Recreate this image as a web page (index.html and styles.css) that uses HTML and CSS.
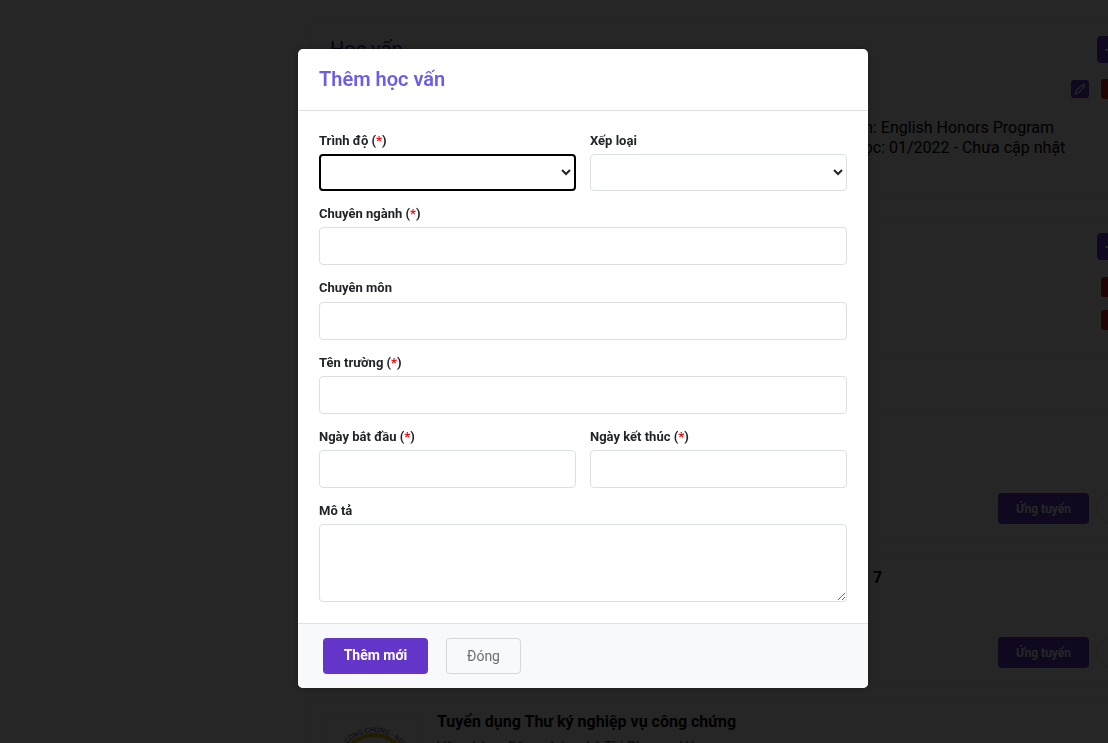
FILE: index.html
```html
<!DOCTYPE html>
<html lang="vi">
<head>
<meta charset="utf-8">
<title>Thêm học vấn</title>
<link rel="stylesheet" href="styles.css">
</head>
<body>
<main class="page">
  <section class="card card-edu">
    <div class="card-head">
      <h2 class="section-title">Học vấn</h2>
      <button class="add-btn" type="button">
        <svg viewBox="0 0 14 14" width="14" height="14" stroke="currentColor" stroke-width="2"><path d="M0 7h14M7 0v14"/></svg>
      </button>
    </div>
    <div class="edu-actions">
      <button class="icon-btn purple" type="button">
        <svg viewBox="0 0 16 16" width="14" height="14" fill="none" stroke="currentColor" stroke-width="1.3"><path d="M2.5 13.5l.8-3.2 7.6-7.6a1.3 1.3 0 0 1 1.9 0l.5.5a1.3 1.3 0 0 1 0 1.9l-7.6 7.6z"/><path d="M9.8 3.8l2.4 2.4"/></svg>
      </button>
      <button class="icon-btn red" type="button">
        <svg viewBox="0 0 12 14" width="12" height="14" fill="none" stroke="currentColor" stroke-width="1.2"><path d="M0 3h12M4 3V1h4v2M2 3l.6 10h6.8L10 3"/></svg>
      </button>
    </div>
    <div class="edu-text">
      <p>Chuyên ngành: English Honors Program</p>
      <p>Thời gian ở học: 01/2022 - Chưa cập nhật</p>
    </div>
  </section>
  <section class="card card-skill">
    <div class="card-head head-right">
      <button class="add-btn" type="button">
        <svg viewBox="0 0 14 14" width="14" height="14" stroke="currentColor" stroke-width="2"><path d="M0 7h14M7 0v14"/></svg>
      </button>
    </div>
    <div class="red-stack">
      <button class="icon-btn red" type="button">
        <svg viewBox="0 0 12 14" width="12" height="14" fill="none" stroke="currentColor" stroke-width="1.2"><path d="M0 3h12M4 3V1h4v2M2 3l.6 10h6.8L10 3"/></svg>
      </button>
      <button class="icon-btn red" type="button">
        <svg viewBox="0 0 12 14" width="12" height="14" fill="none" stroke="currentColor" stroke-width="1.2"><path d="M0 3h12M4 3V1h4v2M2 3l.6 10h6.8L10 3"/></svg>
      </button>
    </div>
  </section>
  <section class="card card-job">
    <div class="job-foot">
      <button class="apply" type="button">Ứng tuyển</button>
      <span class="round"></span>
    </div>
  </section>
  <section class="card card-job">
    <h3 class="job-title title-right">7</h3>
    <div class="job-foot">
      <button class="apply" type="button">Ứng tuyển</button>
      <span class="round"></span>
    </div>
  </section>
  <section class="card card-last">
    <div class="logo-box">
      <svg viewBox="0 0 98 90" width="98" height="90" fill="none">
        <path id="logo-arc" d="M13 54a35 35 0 0 1 70 0"/>
        <circle cx="48" cy="54" r="32" stroke="#e3c400" stroke-width="4"/>
        <text font-family="Roboto, sans-serif" font-size="7" fill="#16408f"><textPath href="#logo-arc" startOffset="25">CÔNG CHỨNG - NOTARY</textPath></text>
      </svg>
    </div>
    <div>
      <h3 class="job-title">Tuyển dụng Thư ký nghiệp vụ công chứng</h3>
      <p class="job-sub">Văn phòng Công chứng Lê Thị Phương Hà</p>
    </div>
  </section>
</main>

<div class="backdrop"></div>

<div class="modal-wrap">
  <form class="modal">
    <header class="modal-head">
      <h1>Thêm học vấn</h1>
    </header>
    <div class="modal-body">
      <div class="row two">
        <div class="field">
          <label>Trình độ (<span class="req">*</span>)</label>
          <select class="control select focused"><option></option></select>
        </div>
        <div class="field">
          <label>Xếp loại</label>
          <select class="control select"><option></option></select>
        </div>
      </div>
      <div class="field">
        <label>Chuyên ngành (<span class="req">*</span>)</label>
        <input class="control" type="text">
      </div>
      <div class="field">
        <label>Chuyên môn</label>
        <input class="control" type="text">
      </div>
      <div class="field">
        <label>Tên trường (<span class="req">*</span>)</label>
        <input class="control" type="text">
      </div>
      <div class="row two">
        <div class="field">
          <label>Ngày bắt đầu (<span class="req">*</span>)</label>
          <input class="control" type="text">
        </div>
        <div class="field">
          <label>Ngày kết thúc (<span class="req">*</span>)</label>
          <input class="control" type="text">
        </div>
      </div>
      <div class="field last">
        <label>Mô tả</label>
        <textarea class="control area"></textarea>
      </div>
    </div>
    <footer class="modal-foot">
      <button class="btn primary" type="button">Thêm mới</button>
      <button class="btn ghost" type="button">Đóng</button>
    </footer>
  </form>
</div>
</body>
</html>
```
FILE: styles.css
```css
* { box-sizing: border-box; }
html, body { margin: 0; height: 100%; overflow: hidden; }
body { background: #fff; font-family: Roboto, "Noto Sans", sans-serif; color: #212529; }

.page { width: 830px; margin-left: 310px; padding-top: 19px; display: flex; flex-direction: column; height: 743px; overflow: hidden; }
.card { border: 1px solid #eef0f4; background: #fff; flex: none; }
.card-edu { height: 175px; padding: 16px 12px 0 19px; margin-bottom: 22px; }
.card-head { display: flex; justify-content: space-between; }
.head-right { justify-content: flex-end; }
.section-title { margin: 0; padding-top: 1px; font-size: 20px; font-weight: 400; color: #2c1d8f; line-height: 24px; }
.add-btn { width: 30px; height: 27px; border: 0; border-radius: 4px; background: #6435c9; color: #fff; padding: 0; display: flex; align-items: center; justify-content: center; }
.edu-actions { display: flex; align-items: center; justify-content: flex-end; gap: 12px; margin-top: 16px; }
.edu-text { margin: 19px 0 0 442px; font-size: 16px; line-height: 20px; color: #000; white-space: nowrap; }
.edu-text p { margin: 0; }
.icon-btn { width: 18px; height: 18px; border: 0; border-radius: 3px; padding: 0; display: flex; align-items: center; justify-content: center; color: #fff; }
.purple { background: #6435c9; }
.red { background: #d92525; width: 26px; height: 20px; }
.card-skill { height: 138px; padding: 16px 12px 0 19px; margin-bottom: 55px; }
.red-stack { display: flex; flex-direction: column; align-items: flex-end; gap: 13px; margin-top: 17px; }
.card-job { height: 130px; display: flex; flex-direction: column; padding: 14px 0 14px; margin-bottom: 14px; }
.job-foot { margin: auto 0 0 687px; display: flex; align-items: center; gap: 7px; }
.apply { width: 91px; height: 31px; border: 0; border-radius: 4px; background: #6435c9; color: #fff; font: 700 12px Roboto, sans-serif; padding: 0; }
.round { width: 31px; height: 31px; border: 1px solid #d8d8d8; border-radius: 50%; }
.job-title { margin: 0; font-size: 16px; line-height: 20px; font-weight: 700; color: #000; }
.title-right { margin-left: 562px; }
.card-last { display: flex; gap: 14px; padding: 14px 14px; height: 100px; }
.logo-box { width: 98px; height: 90px; border: 1px solid #eef0f4; flex: none; overflow: hidden; }
.job-sub { margin: 5px 0 0; font-size: 14px; line-height: 20px; color: #555; }

.backdrop { position: fixed; inset: 0; background: rgba(0, 0, 0, .85); }
.modal-wrap { position: fixed; inset: 0; }
.modal { position: absolute; left: 298px; top: 49px; width: 570px; height: 639px; background: #fff; border-radius: 5px; box-shadow: 0 0 8px rgba(0, 0, 0, .3); overflow: hidden; display: flex; flex-direction: column; }
.modal-head { height: 62px; padding: 0 21px; border-bottom: 1px solid #dfe1e5; display: flex; align-items: center; }
.modal-head h1 { margin: 0; font-size: 20px; line-height: 24px; font-weight: 600; color: #6c5ce7; position: relative; top: -1px; }
.modal-body { flex: 1; padding: 19.9px 21px 0; }
.row.two { display: grid; grid-template-columns: 257px 257px; column-gap: 14px; }
.field { margin-bottom: 13px; }
.field.last { margin-bottom: 0; }
label { display: block; font-size: 13px; line-height: 19px; margin-bottom: 4.25px; font-weight: 700; color: #212529; }
.req { color: #ff0000; }
.control { display: block; width: 100%; height: 38px; border: 1px solid #dcdfe4; border-radius: 4px; background: #fff; font: 14px Roboto, sans-serif; color: #212529; padding: 6px 12px; margin: 0; }
.select { height: 37px; padding: 0 0 0 8px; }
.focused { border: 2px solid #000; outline: 0; }
.area { height: 78px; resize: vertical; }
.modal-foot { height: 65px; border-top: 1px solid #dfe1e5; background: #f8f9fb; display: flex; align-items: center; gap: 18px; padding: 0 25px; }
.btn { height: 36px; border-radius: 4px; font: 14px Roboto, sans-serif; padding: 0; }
.primary { width: 105px; background: #6435c9; border: 0; color: #fff; font-weight: 700; padding-bottom: 2px; }
.ghost { width: 75px; background: transparent; border: 1px solid #d5d7dc; color: #6c6f75; }
```
